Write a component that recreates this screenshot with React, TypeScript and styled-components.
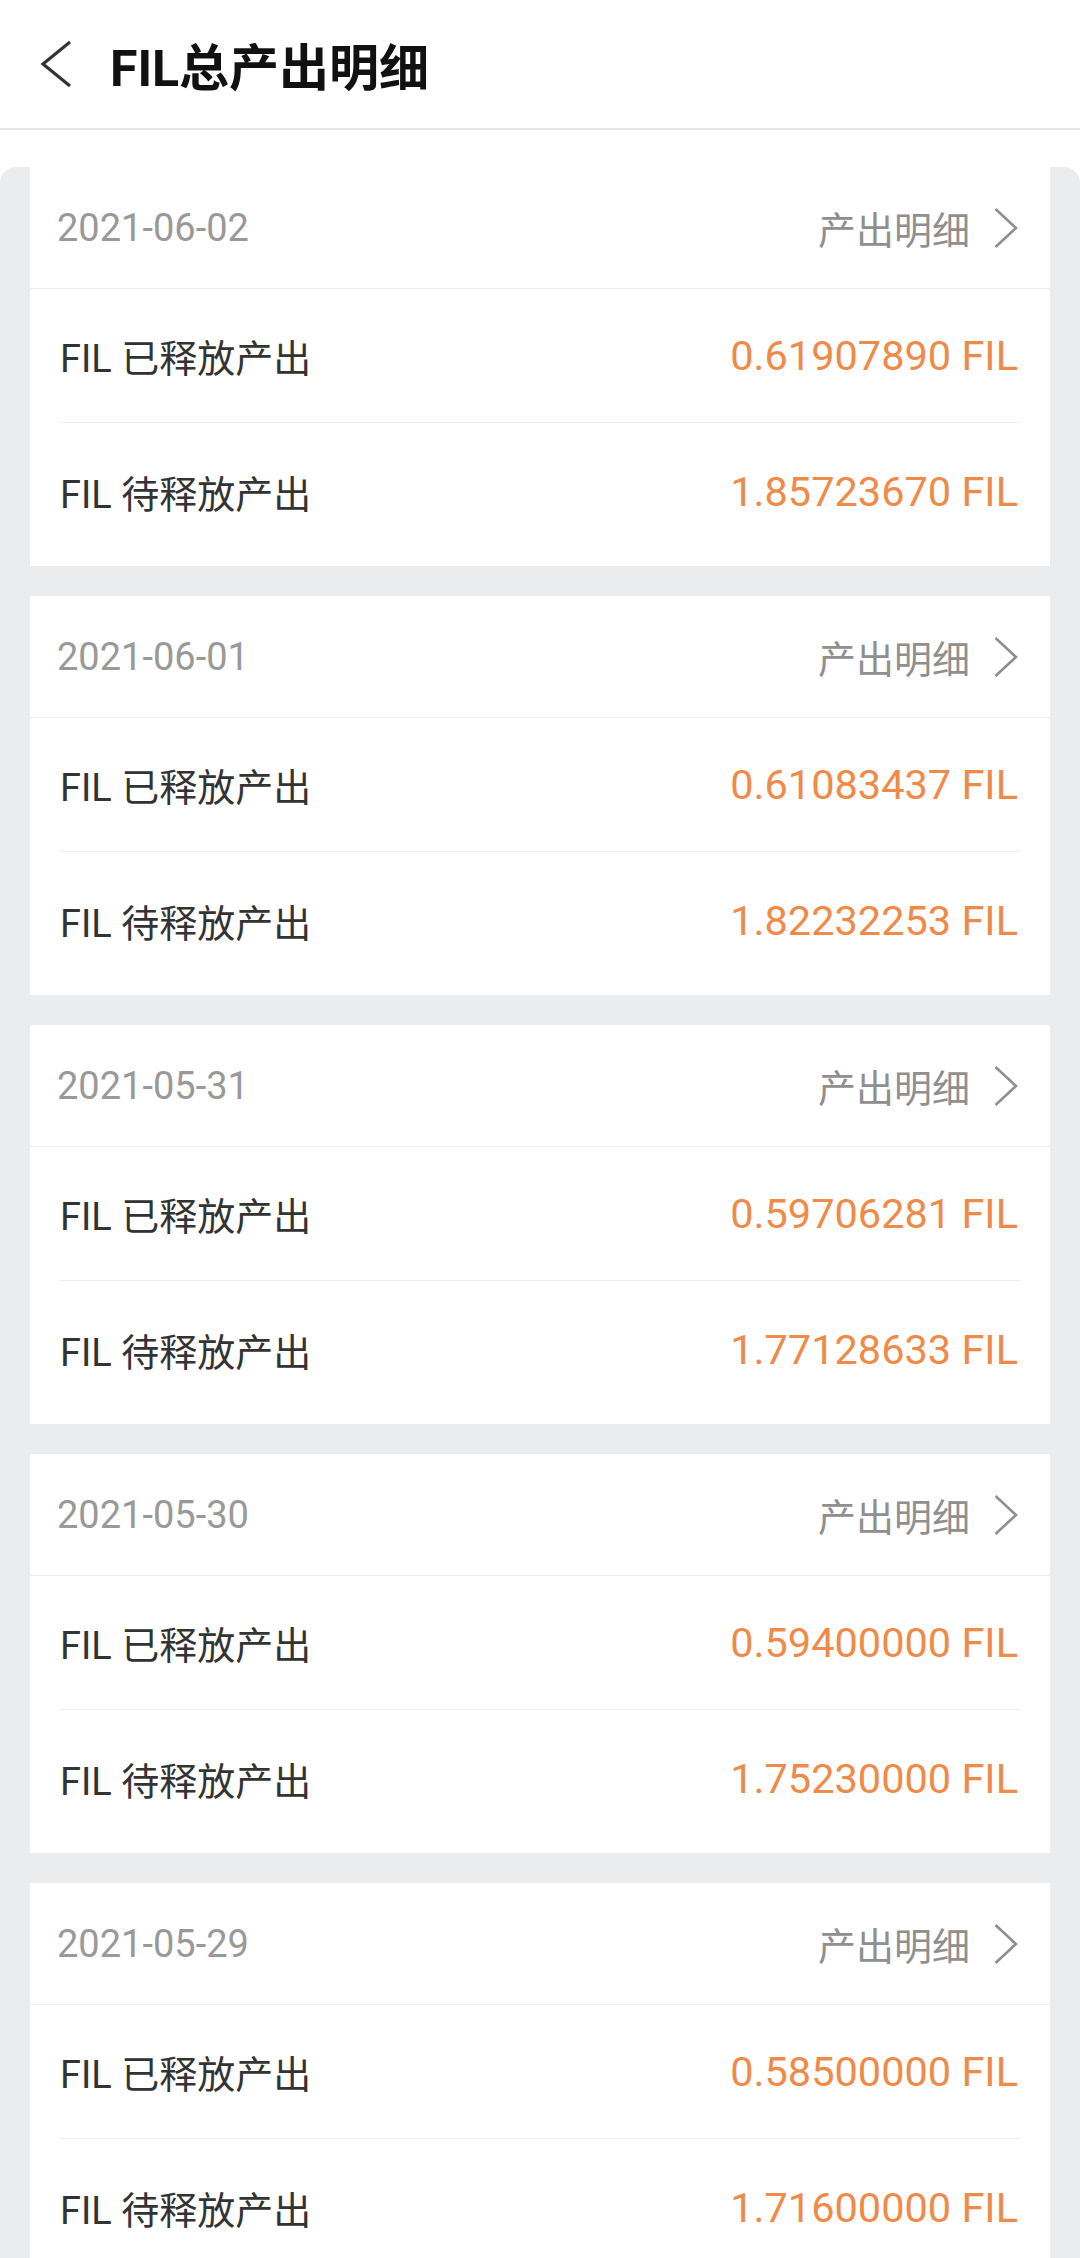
import React from 'react';
import styled, { createGlobalStyle } from 'styled-components';

const GlobalStyle = createGlobalStyle`
  html, body {
    margin: 0;
    padding: 0;
    background: #ffffff;
  }
  body {
    font-family: Roboto, "Noto Sans CJK SC", sans-serif;
    -webkit-font-smoothing: antialiased;
  }
`;

const Page = styled.div`
  width: 1080px;
  min-height: 2258px;
  overflow: hidden;
  background: #ffffff;
`;

const Header = styled.header`
  display: flex;
  align-items: center;
  height: 128px;
  border-bottom: 2px solid #e6e6e6;
  box-sizing: content-box;
`;

const BackButton = styled.button`
  display: flex;
  align-items: center;
  justify-content: center;
  width: 104px;
  height: 128px;
  padding: 0 0 0 8px;
  border: none;
  background: transparent;
  box-sizing: border-box;
`;

const Title = styled.h1`
  margin: 0 0 0 6px;
  font-size: 50px;
  font-weight: 700;
  color: #111111;
  letter-spacing: 0;
`;

const ListPanel = styled.main`
  margin-top: 37px;
  padding: 0 30px 40px;
  background: #ebecee;
  border-radius: 16px 16px 0 0;
  display: flex;
  flex-direction: column;
  gap: 30px;
`;

const Card = styled.section`
  background: #ffffff;
  display: flex;
  flex-direction: column;
`;

const DateRow = styled.div`
  display: flex;
  align-items: center;
  justify-content: space-between;
  height: 121px;
  padding: 0 32px 0 27px;
  border-bottom: 1px solid #ececec;
`;

const DateText = styled.span`
  font-size: 38px;
  color: #999999;
`;

const DetailLink = styled.span`
  display: flex;
  align-items: center;
  gap: 24px;
  font-size: 38px;
  color: #8f8f8f;
`;

const ValueRow = styled.div<{ $divider?: boolean }>`
  display: flex;
  align-items: center;
  justify-content: space-between;
  box-sizing: border-box;
  height: ${(p) => (p.$divider ? '134px' : '143px')};
  padding-bottom: ${(p) => (p.$divider ? '0' : '6px')};
  margin: 0 30px;
  border-bottom: ${(p) => (p.$divider ? '1px solid #ececec' : 'none')};
`;

const Label = styled.span`
  font-size: 38px;
  color: #333333;
`;

const Amount = styled.span`
  font-size: 41.5px;
  color: #ef8a48;
  margin-right: 2px;
`;

const records = [
  { date: '2021-06-02', released: '0.61907890', pending: '1.85723670' },
  { date: '2021-06-01', released: '0.61083437', pending: '1.82232253' },
  { date: '2021-05-31', released: '0.59706281', pending: '1.77128633' },
  { date: '2021-05-30', released: '0.59400000', pending: '1.75230000' },
  { date: '2021-05-29', released: '0.58500000', pending: '1.71600000' },
];

function BackIcon() {
  return (
    <svg width="32" height="48" viewBox="0 0 32 48" fill="none">
      <path d="M30 2 L3 24 L30 46" stroke="#333333" strokeWidth="3.2" strokeLinejoin="miter" />
    </svg>
  );
}

function ChevronRight() {
  return (
    <svg width="24" height="40" viewBox="0 0 24 40" fill="none">
      <path d="M1.5 1 L22 20 L1.5 39" stroke="#8f8f8f" strokeWidth="2.6" />
    </svg>
  );
}

export default function App() {
  return (
    <Page>
      <GlobalStyle />
      <Header>
        <BackButton aria-label="返回">
          <BackIcon />
        </BackButton>
        <Title>FIL总产出明细</Title>
      </Header>
      <ListPanel>
        {records.map((r) => (
          <Card key={r.date}>
            <DateRow>
              <DateText>{r.date}</DateText>
              <DetailLink>
                产出明细
                <ChevronRight />
              </DetailLink>
            </DateRow>
            <ValueRow $divider>
              <Label>FIL 已释放产出</Label>
              <Amount>{r.released} FIL</Amount>
            </ValueRow>
            <ValueRow>
              <Label>FIL 待释放产出</Label>
              <Amount>{r.pending} FIL</Amount>
            </ValueRow>
          </Card>
        ))}
      </ListPanel>
    </Page>
  );
}
